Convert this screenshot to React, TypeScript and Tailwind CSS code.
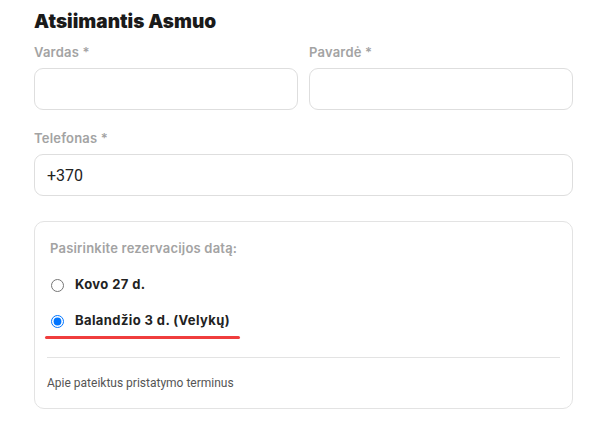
import React from "react";

export default function App() {
  const label = "block text-[13px] font-semibold text-[#a3a3a3] mb-[8px] leading-[16px] tracking-[0.2px]";
  const input =
    "block w-full h-[42px] rounded-[9px] border border-[#dedede] bg-white px-[12px] text-[16px] text-[#222] outline-none";
  return (
    <div className="w-[598px] h-[425px] bg-white pl-[34px] pt-[8px]" style={{ fontFamily: '"Inter", "Noto Sans", sans-serif' }}>
      <div className="w-[539px]">
        <h2 className="text-[19px] font-black text-[#1a1a1a] leading-[28px]" style={{ fontFamily: '"Inter", sans-serif' }}>
          Atsiimantis Asmuo
        </h2>
        <div className="mt-[8px] grid grid-cols-2 gap-[11px]">
          <div>
            <label className={label}>Vardas *</label>
            <input className={input} />
          </div>
          <div>
            <label className={label}>Pavardė *</label>
            <input className={input} />
          </div>
        </div>
        <div className="mt-[20px]">
          <label className={label}>Telefonas *</label>
          <input className={input} defaultValue="+370" style={{ fontFamily: 'Roboto, "Liberation Sans", sans-serif' }} />
        </div>
        <div className="mt-[25px] rounded-[10px] border border-[#e3e3e3] px-[15px] pt-[17px] pb-[17px]">
          <div className="text-[13px] font-semibold text-[#a3a3a3] leading-[18px] tracking-[0.2px]">Pasirinkite rezervacijos datą:</div>
          <label className="mt-[18px] flex items-center gap-[11px] pl-[1px] h-[20px]">
            <input type="radio" name="d" className="m-0 w-[13px] h-[13px]" />
            <span className="text-[13px] font-bold text-[#222] tracking-[0.4px]">Kovo 27 d.</span>
          </label>
          <div className="mt-[16px] inline-block">
            <label className="flex items-center gap-[11px] pl-[1px] h-[20px]">
              <input type="radio" name="d" defaultChecked className="m-0 w-[13px] h-[13px]" />
              <span className="text-[13px] font-bold text-[#222] tracking-[0.4px]">Balandžio 3 d. (Velykų)</span>
            </label>
            <div className="mt-[5px] -ml-[5px] h-[3px] w-[195px] rounded-full bg-[#f03d3d]" />
          </div>
          <div className="mt-[18px] mx-[-3px] h-px bg-[#e3e3e3]" />
          <div className="mt-[17px] -ml-[3px] text-[12px] text-[#555] leading-[16px]" style={{ fontFamily: 'Roboto, "Liberation Sans", sans-serif' }}>
            Apie pateiktus pristatymo terminus
          </div>
        </div>
      </div>
    </div>
  );
}
